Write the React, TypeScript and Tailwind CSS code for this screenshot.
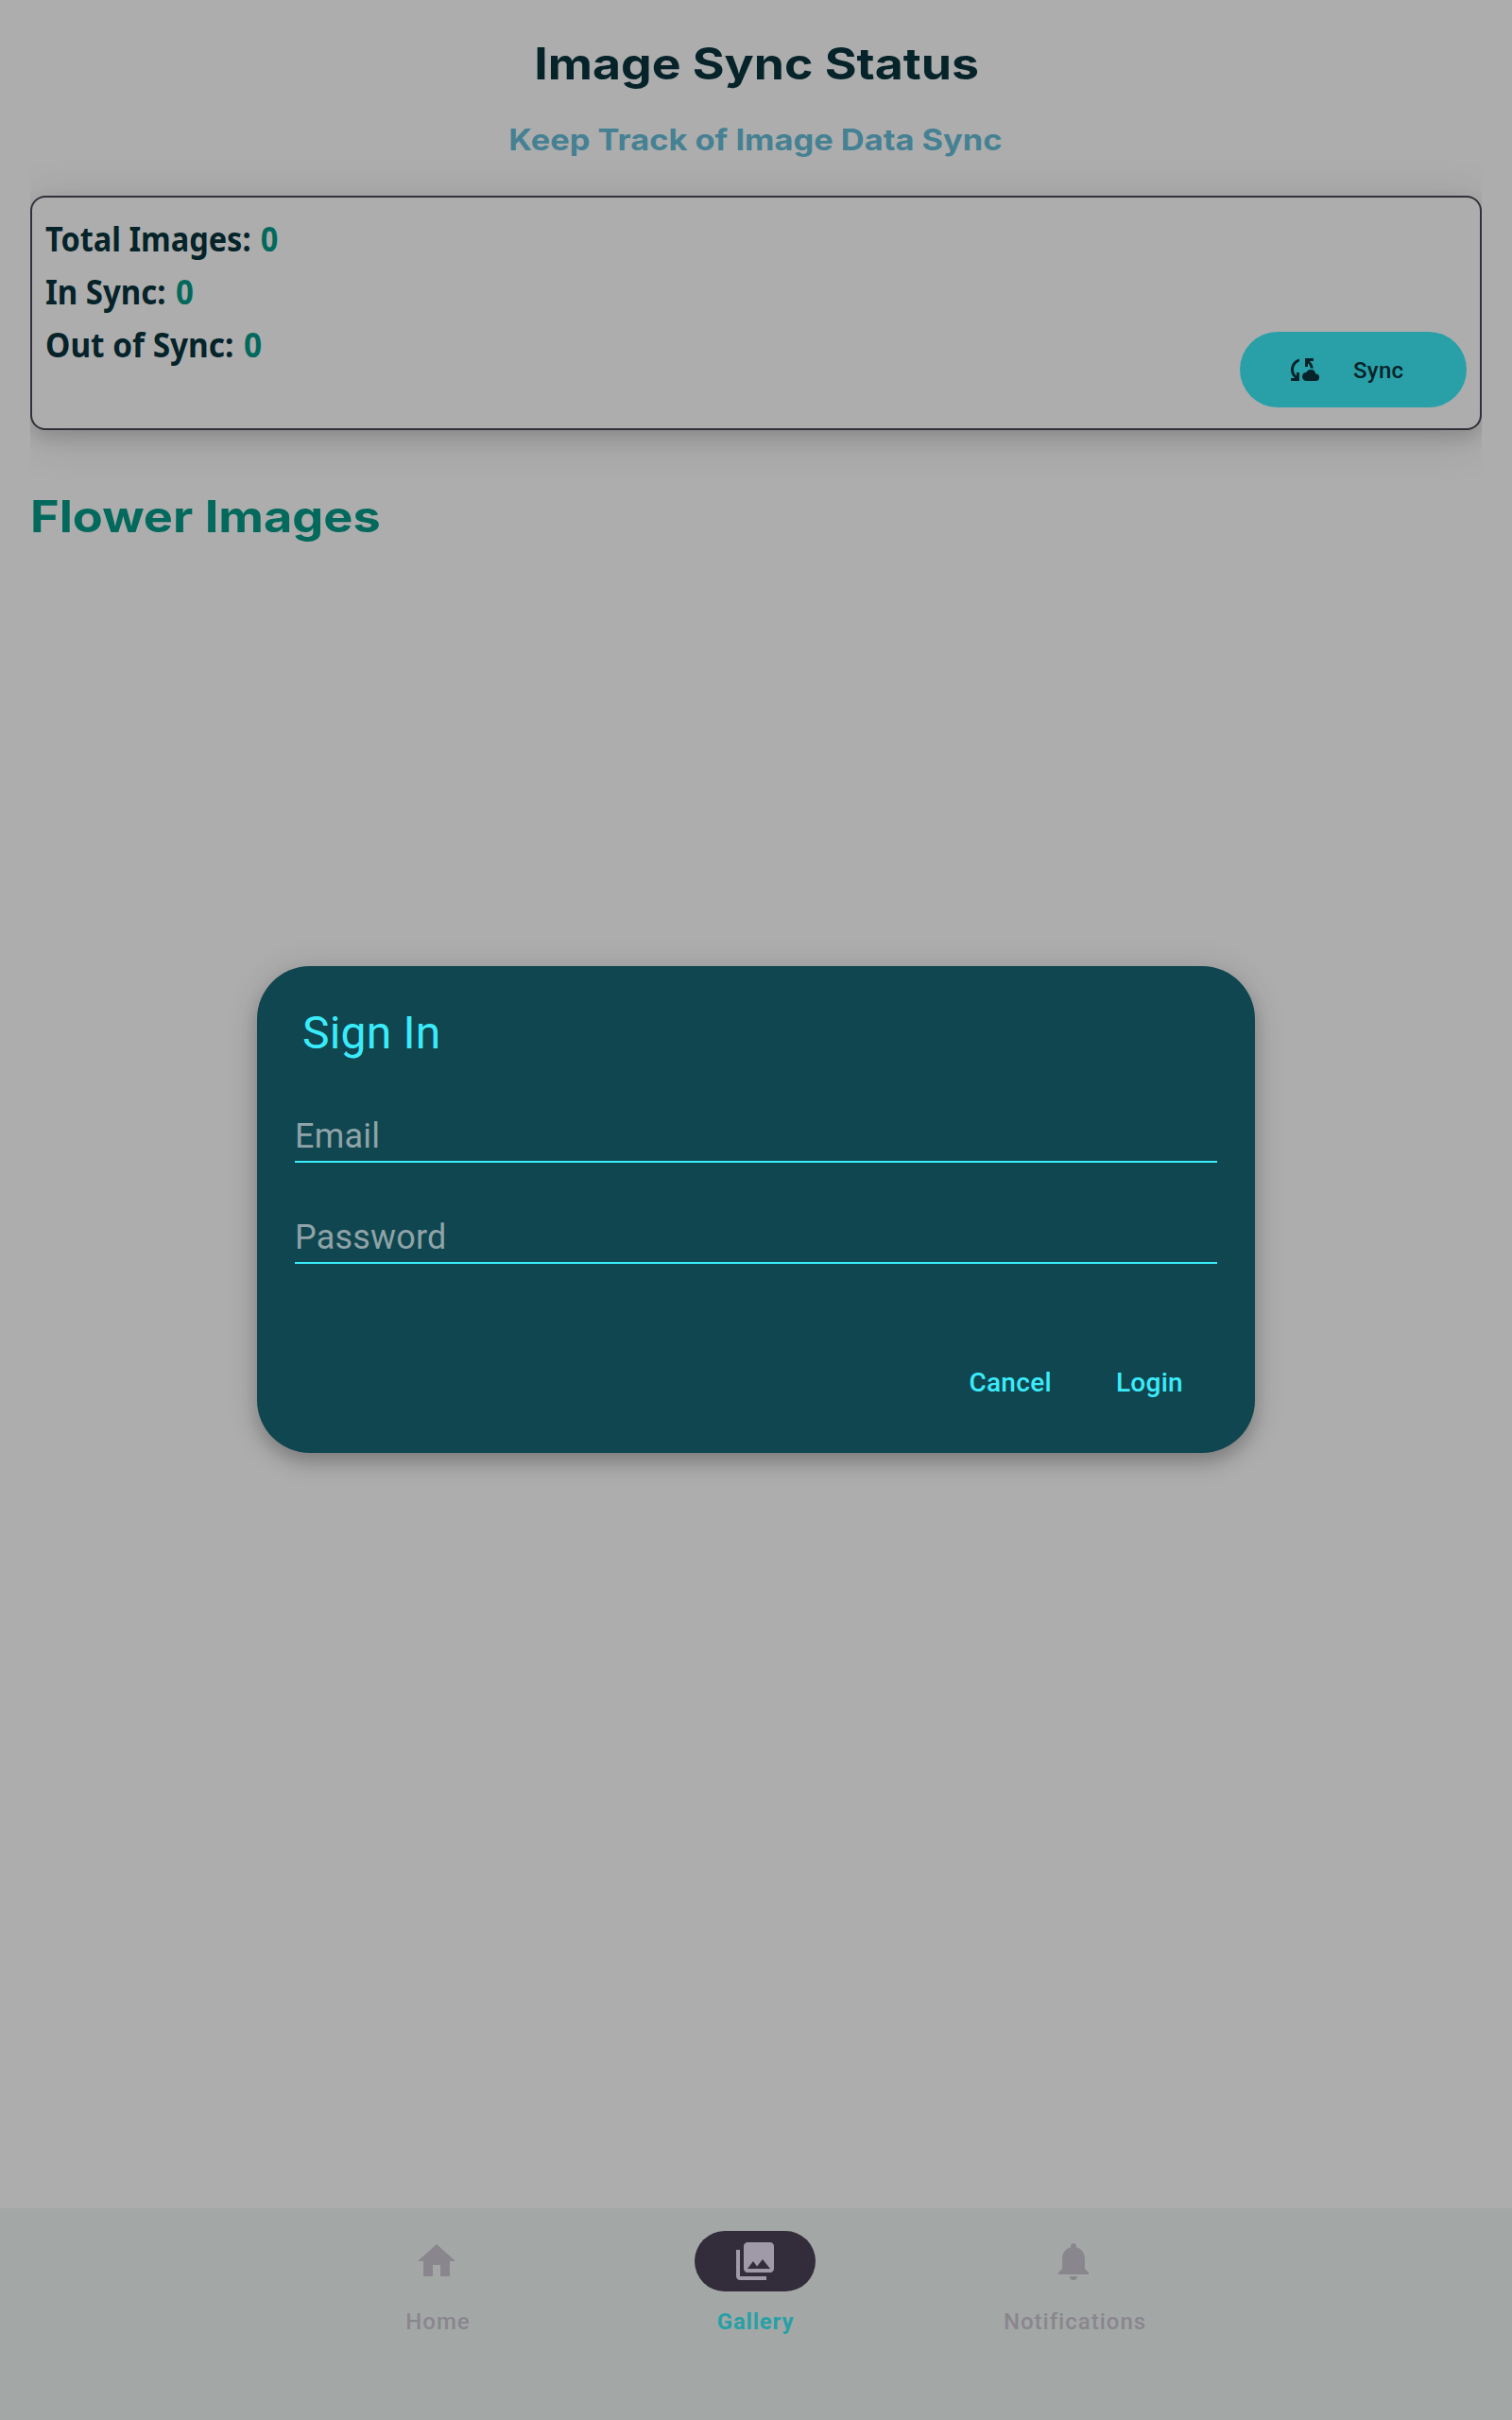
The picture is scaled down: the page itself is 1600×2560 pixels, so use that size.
import { MdCloudSync, MdHome, MdNotifications, MdPhotoLibrary } from 'react-icons/md';
import type { IconType } from 'react-icons';

function StatusLine({ label, value, scale }: { label: string; value: number; scale: string }) {
  return (
    <p className={`h-14 w-max origin-left whitespace-nowrap text-[35px] font-bold leading-[56px] ${scale}`}>
      {label} <span className="ml-[2px] text-[#02695c]">{value}</span>
    </p>
  );
}

function Field({ label }: { label: string }) {
  return (
    <div className="h-[52px] border-b-2 border-[#3aecfb] text-[36px] leading-[48px] tracking-[0.2px] text-[#8fa3a8]">
      {label}
    </div>
  );
}

function NavItem({ icon: Icon, label, active = false }: { icon: IconType; label: string; active?: boolean }) {
  return (
    <div className="flex w-[337px] flex-col items-center">
      <div
        className={`flex h-16 w-32 items-center justify-center rounded-full ${
          active ? 'bg-[#332d3b] text-[#a099a8]' : 'text-[#8a868e]'
        }`}
      >
        <Icon size={48} />
      </div>
      <span
        className={`mt-4 text-2xl leading-8 ${
          active
            ? 'pl-px font-bold tracking-[0.8px] text-[#28a0a6]'
            : 'pl-[3px] font-medium tracking-[1px] text-[#8a868e]'
        }`}
      >
        {label}
      </span>
    </div>
  );
}

export default function App() {
  return (
    <div className="relative flex h-[2560px] w-[1600px] flex-col overflow-hidden bg-[#adadad] font-['Roboto',sans-serif] text-[#052329]">
      <main className="flex flex-1 flex-col px-8 pt-[35px]">
        <h1 className="scale-x-[1.125] pl-px text-center font-['Inter',sans-serif] text-[46px] font-bold leading-[64px]">
          Image Sync Status
        </h1>
        <h2 className="mt-[29px] scale-x-[1.11] pr-px text-center font-['Inter',sans-serif] text-[31px] font-bold leading-10 text-[#458193]">
          Keep Track of Image Data Sync
        </h2>

        <section className="mt-[39px] flex h-[248px] justify-between rounded-2xl border-2 border-[#33303a] bg-[#adadad] pl-[14px] pr-[14px] shadow-[0_8px_18px_rgba(0,0,0,0.13),0_8px_52px_rgba(0,0,0,0.12)] [clip-path:inset(-80px_0px)]">
          <div className="pt-[16px] font-['Noto_Sans',sans-serif]">
            <StatusLine label="Total Images:" value={0} scale="scale-x-[0.928]" />
            <StatusLine label="In Sync:" value={0} scale="scale-x-[0.942]" />
            <StatusLine label="Out of Sync:" value={0} scale="scale-x-[0.953]" />
          </div>
          <button className="mb-[22px] flex h-20 w-60 items-center self-end rounded-full bg-[#29a0a8] pl-12 text-2xl font-medium tracking-[0.3px]">
            <MdCloudSync size={36} />
            <span className="ml-9 pt-[2px]">Sync</span>
          </button>
        </section>

        <h3 className="mt-[59px] w-max origin-left scale-x-[1.136] font-['Inter',sans-serif] text-[46px] font-bold leading-[64px] text-[#02695c]">
          Flower Images
        </h3>
      </main>

      <nav className="flex h-56 justify-center bg-[#a3a8a6] pr-[2px] pt-6">
        <NavItem icon={MdHome} label="Home" />
        <NavItem icon={MdPhotoLibrary} label="Gallery" active />
        <NavItem icon={MdNotifications} label="Notifications" />
      </nav>

      <div className="absolute inset-0 flex items-center justify-center pb-px">
        <div
          role="dialog"
          className="h-[515px] w-[1056px] rounded-[56px] bg-[#10464f] px-10 pt-[39px] text-[#3aecfb] shadow-[0_10px_18px_rgba(0,0,0,0.2),0_4px_36px_rgba(0,0,0,0.12)]"
        >
          <h4 className="pl-2 text-5xl leading-[64px] tracking-[0.2px]">Sign In</h4>
          <div className="mt-[53px] flex flex-col gap-[55px]">
            <Field label="Email" />
            <Field label="Password" />
          </div>
          <div className="mt-[106px] flex justify-end gap-[68px] pr-[36px] text-[28px] font-medium leading-10 tracking-[0.3px]">
            <button>Cancel</button>
            <button>Login</button>
          </div>
        </div>
      </div>
    </div>
  );
}
